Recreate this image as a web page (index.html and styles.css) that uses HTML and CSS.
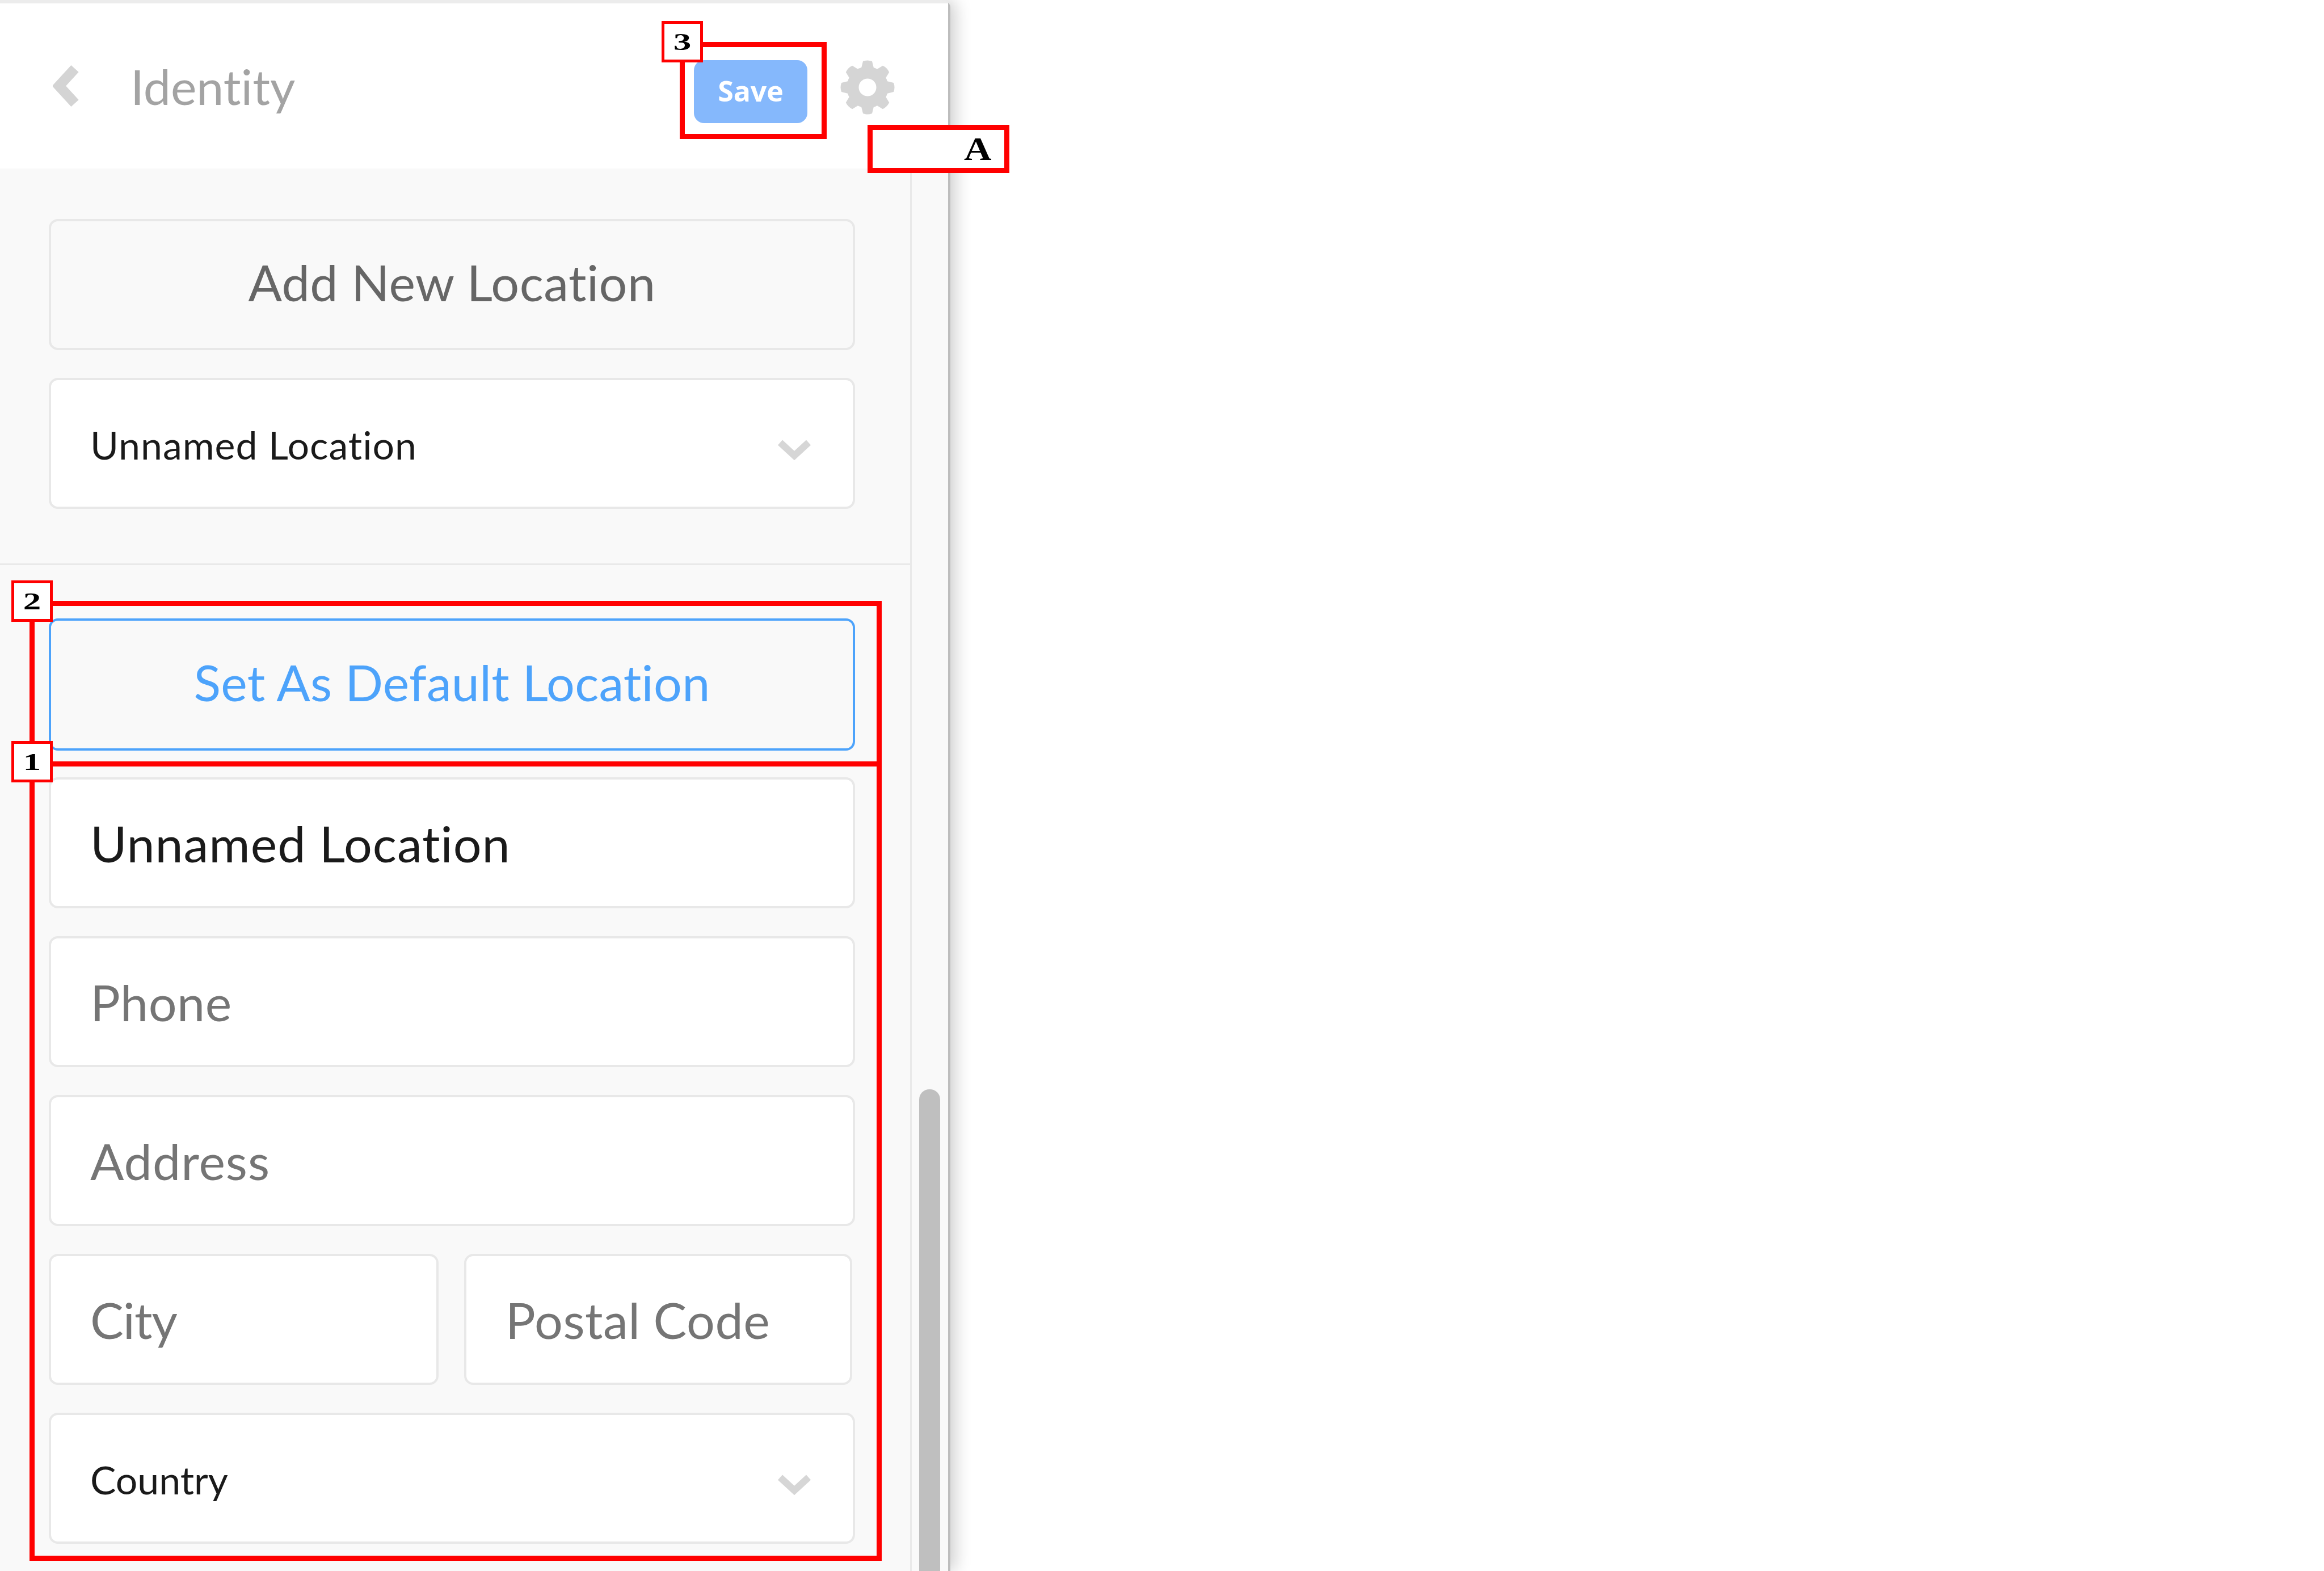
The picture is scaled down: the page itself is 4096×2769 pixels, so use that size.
FILE: index.html
```html
<!DOCTYPE html>
<html lang="en">
<head>
<meta charset="utf-8">
<title>Identity</title>
<link rel="stylesheet" href="styles.css">
</head>
<body>
<div class="canvas">
  <div class="panel">
    <header class="topbar">
      <svg class="back" viewBox="0 0 48 75"><path d="M39 7 L11 37.5 L39 68" /></svg>
      <h1 class="title">Identity</h1>
      <button class="save">Save</button>
      <svg class="gear" viewBox="-48 -48 96 96">
        <circle class="gear-body" r="26"/>
        <g class="gear-teeth">
          <path d="M-11 -34 L-8 -46 Q0 -49 8 -46 L11 -34 Z"/>
          <path d="M-11 -34 L-8 -46 Q0 -49 8 -46 L11 -34 Z" transform="rotate(45)"/>
          <path d="M-11 -34 L-8 -46 Q0 -49 8 -46 L11 -34 Z" transform="rotate(90)"/>
          <path d="M-11 -34 L-8 -46 Q0 -49 8 -46 L11 -34 Z" transform="rotate(135)"/>
          <path d="M-11 -34 L-8 -46 Q0 -49 8 -46 L11 -34 Z" transform="rotate(180)"/>
          <path d="M-11 -34 L-8 -46 Q0 -49 8 -46 L11 -34 Z" transform="rotate(225)"/>
          <path d="M-11 -34 L-8 -46 Q0 -49 8 -46 L11 -34 Z" transform="rotate(270)"/>
          <path d="M-11 -34 L-8 -46 Q0 -49 8 -46 L11 -34 Z" transform="rotate(315)"/>
        </g>
      </svg>
    </header>
    <div class="body">
      <main class="content">
        <section class="picker">
          <div class="field action track-mid">Add New Location</div>
          <div class="field select small track-wide">Unnamed Location
            <svg class="chevron" viewBox="0 0 60 38"><path d="M5 6 L30 29 L55 6"/></svg>
          </div>
        </section>
        <section class="details">
          <div class="field action default track-low">Set As Default Location</div>
          <div class="field filled default-gap track-wide">Unnamed Location</div>
          <div class="field placeholder track-mid">Phone</div>
          <div class="field placeholder track-wide">Address</div>
          <div class="split">
            <div class="field placeholder city track-tight">City</div>
            <div class="field placeholder postal track-mid">Postal Code</div>
          </div>
          <div class="field select small">Country
            <svg class="chevron" viewBox="0 0 60 38"><path d="M5 6 L30 29 L55 6"/></svg>
          </div>
        </section>
      </main>
      <aside class="scrolltrack"><div class="thumb"></div></aside>
    </div>
  </div>

  <div class="mark mark-save"></div>
  <div class="mark mark-default"></div>
  <div class="mark mark-fields"></div>
  <div class="tag tag-3"><span>3</span></div>
  <div class="tag tag-2"><span>2</span></div>
  <div class="tag tag-1"><span>1</span></div>
  <div class="tag-a"><span>A</span></div>
</div>
</body>
</html>
```
FILE: styles.css
```css
* { box-sizing: border-box; }
html, body { margin: 0; padding: 0; background: #fff; }
.canvas {
  position: relative;
  width: 4096px;
  height: 2769px;
  overflow: hidden;
  background: #fff;
  font-family: "Lato", "Liberation Sans", sans-serif;
  font-variant-ligatures: none;
}
.panel {
  width: 1675px;
  height: 2769px;
  display: flex;
  flex-direction: column;
  border-top: 6px solid #ececec;
  border-right: 4px solid #bdbdbd;
  border-top-right-radius: 14px;
  background: #fff;
  box-shadow: 8px 0 30px rgba(0,0,0,.2);
}
.topbar {
  height: 291px;
  flex: none;
  display: flex;
  align-items: flex-start;
  background: #fff;
}
.back {
  width: 48px;
  height: 75px;
  margin: 108px 0 0 93px;
  flex: none;
  fill: none;
  stroke: #d4d4d4;
  stroke-width: 18;
}
.title {
  margin: 92px 0 0 89px;
  font-size: 86px;
  line-height: 108px;
  font-weight: 400;
  color: #a3a3a3;
  flex: 1;
}
.save {
  width: 200px;
  height: 111px;
  margin-top: 100px;
  border: 0;
  border-radius: 18px;
  background: #85b8fc;
  color: #fff;
  font-family: "Open Sans", "Liberation Sans", sans-serif;
  font-weight: 700;
  font-size: 50px;
  padding: 0 0 4px;
}
.gear {
  width: 96px;
  height: 96px;
  margin: 100px 94px 0 58px;
  flex: none;
}
.gear-body { fill: none; stroke: #d5d5d5; stroke-width: 21; }
.gear-teeth path { fill: #d5d5d5; }
.body {
  flex: 1;
  display: flex;
  background: #f9f9f9;
  min-height: 0;
}
.content {
  width: 1604px;
  flex: none;
}
.picker {
  padding: 89px 97px 96px 86px;
  display: flex;
  flex-direction: column;
  gap: 49px;
  border-bottom: 3px solid #e9e9e9;
}
.details {
  padding: 94px 97px 0 86px;
  display: flex;
  flex-direction: column;
  gap: 49px;
}
.field {
  height: 231px;
  display: flex;
  align-items: center;
  padding-left: 69px;
  border: 4px solid #e8e8e8;
  border-radius: 16px;
  background: #fff;
  font-size: 88px;
  position: relative;
}
.action {
  justify-content: center;
  padding: 0 0 9px;
  background: #f9f9f9;
  color: #666;
}
.default {
  height: 233px;
  border-color: #4da3fb;
  color: #4da3fb;
}
.default-gap { margin-top: -2px; }
.filled { color: #1a1a1a; }
.placeholder { color: #757575; }
.small { font-size: 68px; color: #1a1a1a; padding-top: 4px; }
.track-wide { letter-spacing: 1px; }
.track-mid { letter-spacing: .5px; }
.track-low { letter-spacing: .25px; }
.track-tight { letter-spacing: -1px; }
.chevron {
  position: absolute;
  right: 73px;
  top: 104px;
  width: 60px;
  height: 38px;
  fill: none;
  stroke: #d6d6d6;
  stroke-width: 12;
}
.split { display: flex; gap: 45px; }
.city { width: 687px; }
.postal { width: 684px; }
.scrolltrack {
  flex: 1;
  display: flex;
  flex-direction: column;
  padding: 1623px 14px 0 13px;
  border-left: 3px solid #e9e9e9;
}
.thumb {
  flex: 1;
  background: #bfbfbf;
  border-radius: 18px 18px 0 0;
}
.mark {
  position: absolute;
  border: 9px solid #ff0000;
}
.mark-save { left: 1198px; top: 74px; width: 259px; height: 171px; }
.mark-default { left: 52px; top: 1059px; width: 1502px; height: 292px; }
.mark-fields { left: 52px; top: 1342px; width: 1502px; height: 1409px; }
.tag {
  position: absolute;
  width: 73px;
  height: 73px;
  left: 20px;
  display: flex;
  align-items: center;
  justify-content: center;
  background: #fff;
  border: 5px solid #ff0000;
  font-family: "Liberation Serif", serif;
  font-weight: 700;
  font-size: 42px;
  color: #000;
}
.tag span { display: block; transform: scaleX(1.5); }
.tag-3 { left: 1166px; top: 37px; }
.tag-2 { top: 1023px; }
.tag-1 { top: 1306px; }
.tag-a {
  position: absolute;
  left: 1529px;
  top: 220px;
  width: 250px;
  height: 85px;
  display: flex;
  align-items: center;
  justify-content: flex-end;
  padding-right: 27px;
  background: #fff;
  border: 9px solid #ff0000;
  font-family: "Liberation Serif", serif;
  font-weight: 700;
  font-size: 56px;
  color: #000;
}
.tag-a span { display: block; transform: scaleX(1.2); }
```
